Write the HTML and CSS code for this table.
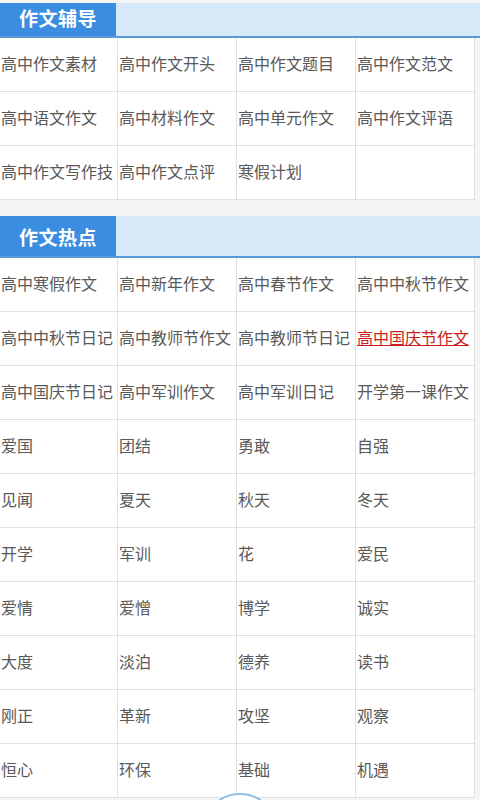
FILE: index.html
```html
<!DOCTYPE html>
<html lang="zh">
<head>
<meta charset="utf-8">
<link rel="stylesheet" href="styles.css">
</head>
<body>
<div class="page">
  <section class="section first">
    <div class="head head-short"><div class="tab">作文辅导</div></div>
    <div class="grid">
      <div class="cell">高中作文素材</div><div class="cell">高中作文开头</div><div class="cell">高中作文题目</div><div class="cell">高中作文范文</div>
      <div class="cell">高中语文作文</div><div class="cell">高中材料作文</div><div class="cell">高中单元作文</div><div class="cell">高中作文评语</div>
      <div class="cell">高中作文写作技</div><div class="cell">高中作文点评</div><div class="cell">寒假计划</div><div class="cell"></div>
    </div>
  </section>
  <section class="section">
    <div class="head"><div class="tab">作文热点</div></div>
    <div class="grid">
      <div class="cell">高中寒假作文</div><div class="cell">高中新年作文</div><div class="cell">高中春节作文</div><div class="cell">高中中秋节作文</div>
      <div class="cell">高中中秋节日记</div><div class="cell">高中教师节作文</div><div class="cell">高中教师节日记</div><div class="cell"><a class="hot" href="#">高中国庆节作文</a></div>
      <div class="cell">高中国庆节日记</div><div class="cell">高中军训作文</div><div class="cell">高中军训日记</div><div class="cell">开学第一课作文</div>
      <div class="cell">爱国</div><div class="cell">团结</div><div class="cell">勇敢</div><div class="cell">自强</div>
      <div class="cell">见闻</div><div class="cell">夏天</div><div class="cell">秋天</div><div class="cell">冬天</div>
      <div class="cell">开学</div><div class="cell">军训</div><div class="cell">花</div><div class="cell">爱民</div>
      <div class="cell">爱情</div><div class="cell">爱憎</div><div class="cell">博学</div><div class="cell">诚实</div>
      <div class="cell">大度</div><div class="cell">淡泊</div><div class="cell">德养</div><div class="cell">读书</div>
      <div class="cell">刚正</div><div class="cell">革新</div><div class="cell">攻坚</div><div class="cell">观察</div>
      <div class="cell">恒心</div><div class="cell">环保</div><div class="cell">基础</div><div class="cell">机遇</div>
    </div>
  </section>
</div>
<div class="float-btn"></div>
</body>
</html>
```

FILE: styles.css
```css
html, body {
  margin: 0;
  padding: 0;
}
body {
  background: #f5f5f5;
  font-family: "Noto Sans CJK SC", "Noto Sans", sans-serif;
  width: 480px;
  height: 800px;
  overflow: hidden;
  position: relative;
}
.page {
  display: flex;
  flex-direction: column;
}
.section {
  margin-top: 16px;
}
.section.first {
  margin-top: 3px;
}
.head {
  display: flex;
  height: 40px;
  background: #d8eafa;
  border-bottom: 2px solid #5a9ad6;
}
.head-short {
  height: 33px;
}
.head-short .tab {
  padding-bottom: 4px;
  box-sizing: border-box;
}
.tab {
  width: 116px;
  background: #3a8de0;
  color: #fff;
  font-weight: bold;
  font-size: 19px;
  display: flex;
  align-items: center;
  justify-content: center;
  letter-spacing: 0.5px;
}
.grid {
  display: grid;
  grid-template-columns: 118px 119px 119px 118px;
  width: 475px;
  background: #fff;
  border-right: 1px solid #e0e0e0;
  box-sizing: border-box;
}
.cell {
  height: 53px;
  border-bottom: 1px solid #e0e0e0;
  border-right: 1px solid #e0e0e0;
  display: flex;
  align-items: center;
  padding-left: 1px;
  padding-bottom: 3px;
  box-sizing: border-box;
  height: 54px;
  font-size: 16px;
  color: #595959;
  white-space: nowrap;
  overflow: hidden;
}
.cell:nth-child(4n) {
  border-right: none;
}
.hot {
  color: #c81e1e;
  text-decoration: underline;
}
.float-btn {
  position: absolute;
  left: 202px;
  top: 793px;
  width: 72px;
  height: 72px;
  border-radius: 50%;
  border: 2px solid #8dbfe9;
  background: #fff;
}
```
